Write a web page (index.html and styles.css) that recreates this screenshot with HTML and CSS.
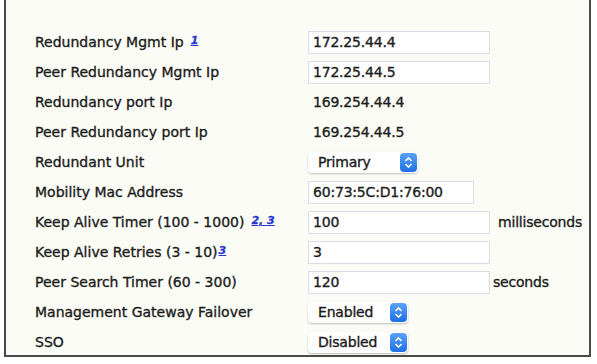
FILE: index.html
```html
<!DOCTYPE html>
<html lang="en">
<head>
  <meta charset="UTF-8" />
  <title>Redundancy Global Configuration</title>
  <link rel="stylesheet" href="styles.css">
</head>
<body>
  <div class="frame">
    <div class="form">
      <div class="label">Redundancy Mgmt Ip <a class="note" href="#">1</a></div>
      <div class="value"><span class="input w-ip">172.25.44.4</span></div>

      <div class="label">Peer Redundancy Mgmt Ip</div>
      <div class="value"><span class="input w-ip">172.25.44.5</span></div>

      <div class="label">Redundancy port Ip</div>
      <div class="value"><span class="plain">169.254.44.4</span></div>

      <div class="label">Peer Redundancy port Ip</div>
      <div class="value"><span class="plain">169.254.44.5</span></div>

      <div class="label">Redundant Unit</div>
      <div class="value">
        <span class="select w-unit">Primary<span class="arrows"><svg width="9" height="13" viewBox="0 0 9 13"><path d="M1.5 5 L4.5 2 L7.5 5 M1.5 8 L4.5 11 L7.5 8" fill="none" stroke="#fff" stroke-width="1.6"/></svg></span></span>
      </div>

      <div class="label">Mobility Mac Address</div>
      <div class="value"><span class="input w-mac">60:73:5C:D1:76:00</span></div>

      <div class="label">Keep Alive Timer (100 - 1000)<a class="note" href="#">2, 3</a></div>
      <div class="value"><span class="input w-ip">100</span><span class="unit">milliseconds</span></div>

      <div class="label">Keep Alive Retries (3 - 10)<a class="note tight" href="#">3</a></div>
      <div class="value"><span class="input w-ip">3</span></div>

      <div class="label">Peer Search Timer (60 - 300)</div>
      <div class="value"><span class="input w-ip">120</span><span class="unit short">seconds</span></div>

      <div class="label">Management Gateway Failover</div>
      <div class="value">
        <span class="select w-state">Enabled<span class="arrows"><svg width="9" height="13" viewBox="0 0 9 13"><path d="M1.5 5 L4.5 2 L7.5 5 M1.5 8 L4.5 11 L7.5 8" fill="none" stroke="#fff" stroke-width="1.6"/></svg></span></span>
      </div>

      <div class="label">SSO</div>
      <div class="value">
        <span class="select w-state">Disabled<span class="arrows"><svg width="9" height="13" viewBox="0 0 9 13"><path d="M1.5 5 L4.5 2 L7.5 5 M1.5 8 L4.5 11 L7.5 8" fill="none" stroke="#fff" stroke-width="1.6"/></svg></span></span>
      </div>
    </div>
  </div>
</body>
</html>
```

FILE: styles.css
```css
body {
  margin: 0;
  background: #ffffff;
  font-family: "DejaVu Sans", Verdana, sans-serif;
  font-size: 14px;
  color: #1c1c1c;
  -webkit-text-stroke: 0.35px #1c1c1c;
}
.frame {
  margin-left: 4px;
  width: 583px;
  height: 355px;
  background: #fcfcf6;
  border-left: 2px solid #4a4a4a;
  border-right: 2px solid #4a4a4a;
  border-bottom: 2px solid #4a4a4a;
}
.form {
  display: grid;
  grid-template-columns: 273px 1fr;
  grid-auto-rows: 30px;
  padding: 27px 0 0 29px;
}
.label, .value {
  display: flex;
  align-items: center;
}
.value { letter-spacing: -0.2px; }
.note {
  color: #2a35d0;
  -webkit-text-stroke: 0.3px #2a35d0;
  font-size: 11px;
  font-weight: bold;
  font-style: italic;
  margin-left: 7px;
  margin-top: -3px;
}
.note.tight { margin-left: 1px; }
.input {
  box-sizing: border-box;
  height: 23px;
  line-height: 21px;
  padding-left: 4px;
  background: #ffffff;
  border: 1px solid #dcdce6;
}
.w-ip { width: 182px; }
.w-mac { width: 166px; }
.plain { padding-left: 5px; }
.unit { margin-left: 8px; }
.unit.short { margin-left: 3px; }
.select {
  box-sizing: border-box;
  position: relative;
  height: 21px;
  line-height: 21px;
  padding-left: 10px;
  background: #ffffff;
  border-radius: 4px;
  box-shadow: 0 1px 2px rgba(0, 0, 0, 0.25);
}
.w-unit { width: 110px; }
.w-state { width: 100px; }
.arrows {
  position: absolute;
  right: 1px;
  top: 1px;
  width: 17px;
  height: 19px;
  border-radius: 4px;
  background: linear-gradient(#5aa2f6, #1e6fe8);
  display: flex;
  align-items: center;
  justify-content: center;
  -webkit-text-stroke: 0;
}
```
